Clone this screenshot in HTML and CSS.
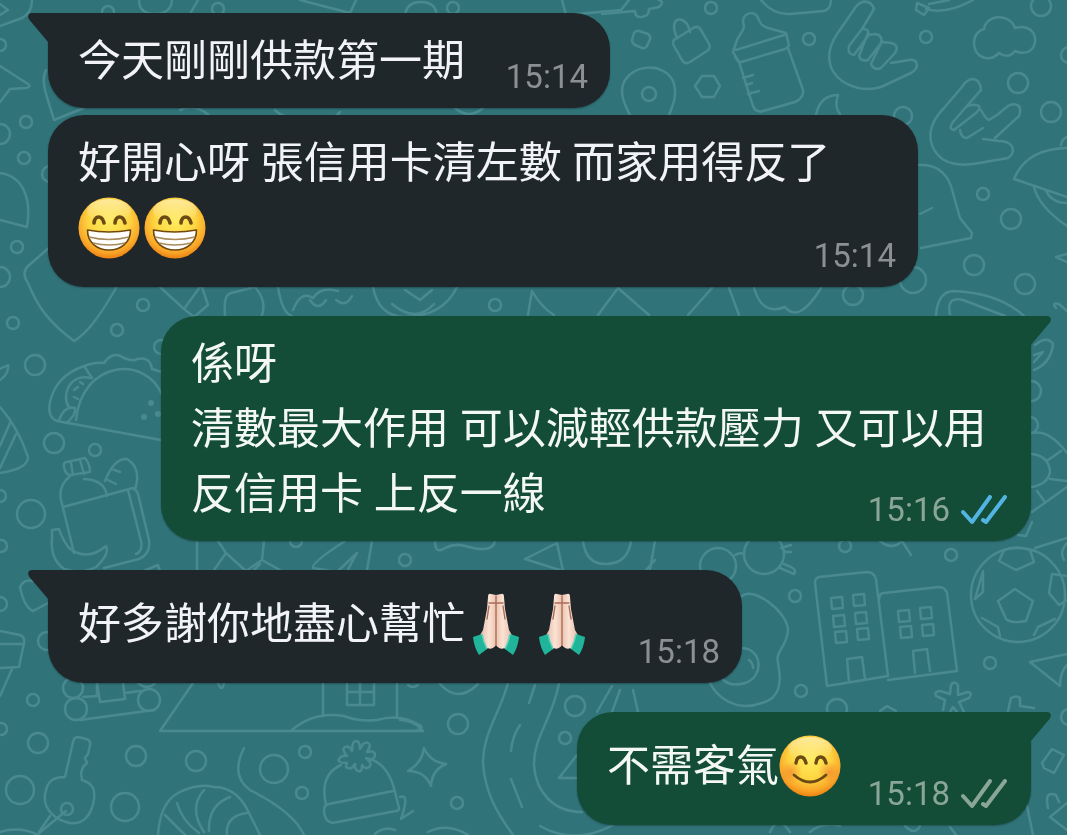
FILE: index.html
```html
<!DOCTYPE html>
<html lang="zh-Hant">
<head>
<meta charset="UTF-8">
<meta name="viewport" content="width=device-width, initial-scale=1.0">
<title>Chat</title>
<link rel="stylesheet" href="styles.css">
</head>
<body>

<!-- shared icons -->
<svg class="defs" width="0" height="0" aria-hidden="true">
  <defs>
    <radialGradient id="face" cx="50%" cy="38%" r="62%">
      <stop offset="0" stop-color="#ffec60"/>
      <stop offset="0.55" stop-color="#fdd540"/>
      <stop offset="0.85" stop-color="#f9a528"/>
      <stop offset="1" stop-color="#ec8212"/>
    </radialGradient>
    <linearGradient id="shine" x1="0" y1="0" x2="0" y2="1">
      <stop offset="0" stop-color="#fff8d8" stop-opacity="0.6"/>
      <stop offset="1" stop-color="#fff8d8" stop-opacity="0"/>
    </linearGradient>
    <radialGradient id="blush">
      <stop offset="0" stop-color="#f0722a" stop-opacity="0.55"/>
      <stop offset="1" stop-color="#f0722a" stop-opacity="0"/>
    </radialGradient>
    <linearGradient id="skin" x1="0" y1="0" x2="1" y2="0">
      <stop offset="0" stop-color="#e3b7a2"/>
      <stop offset="0.3" stop-color="#fae3d6"/>
      <stop offset="0.46" stop-color="#efc9b6"/>
      <stop offset="0.54" stop-color="#efc9b6"/>
      <stop offset="0.7" stop-color="#fae3d6"/>
      <stop offset="1" stop-color="#e3b7a2"/>
    </linearGradient>
  </defs>
  <symbol id="grin" viewBox="0 0 62 62">
    <circle cx="31" cy="31" r="30.5" fill="url(#face)"/>
    <ellipse cx="31" cy="14" rx="22" ry="12" fill="url(#shine)"/>
    <path d="M16 26c1-8 8-8 10 0M37 26c1-8 8-8 10 0" fill="none" stroke="#6b4a14" stroke-width="3.6" stroke-linecap="round"/>
    <path d="M9.500 33q21 4 43 0c0 13-10 20-21.500 20S9.500 46 9.500 33z" fill="#fff" stroke="#70480c" stroke-width="1.600" stroke-linejoin="round"/>
    <path d="M11 40q20 5 40 0M15 46q16 4 32 0" fill="none" stroke="#a98a5c" stroke-width="1.500"/>
  </symbol>
  <symbol id="smile" viewBox="0 0 62 62">
    <circle cx="31" cy="31" r="30.5" fill="url(#face)"/>
    <ellipse cx="31" cy="14" rx="22" ry="12" fill="url(#shine)"/>
    <circle cx="12" cy="37" r="11" fill="url(#blush)"/>
    <circle cx="50" cy="37" r="11" fill="url(#blush)"/>
    <path d="M17 28c1-8 8-8 10 0M37 28c1-8 8-8 10 0" fill="none" stroke="#6b4a14" stroke-width="3.400" stroke-linecap="round"/>
    <path d="M15 40q16 14 32 0" fill="none" stroke="#6b4a14" stroke-width="2.800" stroke-linecap="round"/>
  </symbol>
  <symbol id="pray" viewBox="0 0 62 62">
    <path d="M26 1q-3-1-3 3l-1 12-4 21-4 7 5 9q7 6 12-1 5 7 12 1l5-9-4-7-4-21-1-12q0-4-3-3l-5 1z" fill="url(#skin)"/>
    <path d="M31 3v49M24 10h6M32 10h6M24 13l-2 13M38 13l2 13" fill="none" stroke="#a96e58" stroke-width="1.400" stroke-linecap="round"/>
    <path d="M8 44l9-3q1 7 5 15l-8 6q-5-8-6-18z" fill="#20b59a"/>
    <path d="M54 44l-9-3q-1 7-5 15l8 6q5-8 6-18z" fill="#20b59a"/>
    <path d="M17 41q1 7 5 15M45 41q-1 7-5 15" fill="none" stroke="#5ad3bb" stroke-width="1.500"/>
  </symbol>
  <symbol id="ticks" viewBox="0 0 46 30">
    <path d="M2 17l9 10L29 2M22 25l3 2L44 2" fill="none" stroke="currentColor" stroke-width="4" stroke-linecap="round" stroke-linejoin="round"/>
  </symbol>
  <symbol id="tail" viewBox="0 0 20 29">
    <path d="M20 0H4C0 0-1 4 1.500 7L20 29z" fill="currentColor"/>
  </symbol>
</svg>

<!-- wallpaper doodles -->
<svg class="wallpaper" viewBox="0 0 1067 835" preserveAspectRatio="xMidYMid slice" aria-hidden="true">
  <!-- bubbles -->
  <g>
    <circle cx="0" cy="45" r="6"/><circle cx="26" cy="122" r="6"/><circle cx="0" cy="134" r="10"/><circle cx="24" cy="158" r="6"/>
    <circle cx="17" cy="247" r="6"/><circle cx="0" cy="277" r="10"/><circle cx="13" cy="323" r="6"/><circle cx="50" cy="174" r="8"/>
    <circle cx="143" cy="305" r="6"/><circle cx="117" cy="330" r="6"/><circle cx="35" cy="365" r="10"/><circle cx="161" cy="347" r="7"/>
    <circle cx="54" cy="443" r="10"/><circle cx="95" cy="450" r="6"/><circle cx="0" cy="496" r="6"/><circle cx="31" cy="514" r="14"/>
    <circle cx="1" cy="546" r="6"/><circle cx="0" cy="604" r="7"/><circle cx="47" cy="641" r="9"/><circle cx="33" cy="700" r="6"/>
    <circle cx="1" cy="729" r="6"/><circle cx="38" cy="743" r="10"/><circle cx="20" cy="790" r="14"/><circle cx="125" cy="807" r="14"/>
    <circle cx="136" cy="756" r="10"/><circle cx="196" cy="761" r="10"/><circle cx="274" cy="769" r="14"/><circle cx="305" cy="752" r="6"/>
    <circle cx="302" cy="793" r="6"/><circle cx="458" cy="724" r="10"/><circle cx="457" cy="803" r="6"/><circle cx="575" cy="706" r="10"/>
    <circle cx="565" cy="738" r="6"/><circle cx="405" cy="560" r="6"/><circle cx="296" cy="541" r="6"/><circle cx="495" cy="305" r="6"/>
    <circle cx="218" cy="9" r="6"/><circle cx="108" cy="12" r="6"/><circle cx="453" cy="8" r="6"/>
    <circle cx="641" cy="8" r="0"/><circle cx="711" cy="8" r="6"/><circle cx="809" cy="39" r="6"/><circle cx="926" cy="37" r="6"/><circle cx="1041" cy="6" r="10"/>
    <circle cx="1018" cy="83" r="10"/><circle cx="1051" cy="112" r="10"/><circle cx="903" cy="116" r="9"/><circle cx="983" cy="194" r="6"/>
    <circle cx="1011" cy="219" r="10"/><circle cx="974" cy="265" r="10"/><circle cx="1025" cy="284" r="10"/><circle cx="913" cy="280" r="13"/>
    <circle cx="853" cy="295" r="10"/><circle cx="1031" cy="391" r="10"/><circle cx="1030" cy="425" r="8"/><circle cx="845" cy="546" r="6"/>
    <circle cx="951" cy="555" r="6"/><circle cx="795" cy="596" r="6"/><circle cx="990" cy="663" r="6"/><circle cx="801" cy="691" r="6"/>
    <circle cx="837" cy="709" r="10"/><circle cx="1069" cy="55" r="8"/><circle cx="1069" cy="717" r="8"/>
  </g>
  <!-- top left corner -->
  <path d="M0 26l22-8q10-5 10-18M0 4l8 6-8 5M0 66l28 18q4 3-2 4l-16 1-10 13M0 173c22 3 32 24 27 54L0 220"/>
  <path d="M46 70c-6 12 1 26 8 50l30-12M58 240l-30 26q-7 7 0 17c10 25 22 40 46 58 14-8 28-28 46-60"/>
  <path d="M139 0q0 14 16 14T172 0M190 14l8-14M300 0l50 13 6-13M405 18q0-16 16-16t16 16M562 0l4 15 55-5 8-10"/>
  <!-- row between bubbles 1 and 2 -->
  <path d="M180 110q15-7 30 6M275 110q5 5 10 6M340 112l-5 5M455 108q14 12 28 0"/>
  <!-- puzzle, lock, pin -->
  <path d="M602 14l33-3q0 7 7 6t7-8l10-2q6-5 0-7"/>
  <path d="M634 33q2-3 5-2l9 3q3 2 2 5l-3 7q-2 3-5 2l-7-3q-3-2-3-5z"/>
  <path d="M674 40l19-12q5-3 8 2l8 14q2 4-2 7l-17 11q-5 3-8-2l-8-14q-2-4 0-6zM677 38c-6-14-2-20 5-18 6 2 7 8 8 12"/>
  <path d="M630 115c-8-15-10-24-6-33 10-19 40-19 49-1 5 13 0 24-4 34"/><circle cx="649" cy="94" r="7"/>
  <path d="M702 76h12l6 10-6 11h-12l-7-11z"/>
  <!-- baby bottle -->
  <path d="M739 62l-6-10 4-12c4-8 7-10 7-14-4-12 8-16 13-10 3 5 2 9 11 12l18 5 3 12q-1 3-4 4l-44 13q-4 0-6-6M736 50l48-15M739 62l14 44q3 7 10 5l32-9q9-4 8-12l-15-42M743 78l10-3M746 85l6-2M748 94l11-3"/>
  <path d="M761 0q12 15 29 14l34-3q7-2 7-11"/>
  <!-- call me hand -->
  <path d="M874 9q-3-9-12-7-5 2-9 9l-16 23c-12 18-10 36 5 47 14 9 26 10 39 6l30-14q8-5 5-11-2-3-7-2l-18 3"/>
  <path d="M874 9l-12 20M862 29l-13 17q-2 8 5 9l14-19q2-8-6-7M868 33l-9 23q2 6 9 4l13-17q2-8-6-9l-7 1M882 41l-11 23q3 7 10 4l14-15q5-8-4-10l-9-1"/>
  <path d="M816 115q4-20 22-20-4 12 2 19"/>
  <!-- rock hand -->
  <path d="M981 90q-1-11-9-11-6 1-10 8l-18 21c-15 15-18 32-7 46 10 12 27 12 42 9l29-5q8-6 3-13-4-4-12-4l-16-2M995 138l24-22q3-9-2-11-4-2-9 1l-11 9-8 5q-4-2-8-10M981 90l-15 17-13 15q-5 7 1 8l22-17q7-7 0-8-5-1-10 2M960 130q1 8 7 8l16-10M967 138l16-10"/>
  <!-- cloud -->
  <path d="M984 29c2-15 26-16 31-1 13-4 21 4 20 14-2 12-13 12-20 9-5 7-12 5-16 2-11 11-25 3-25-10 0-8 5-13 10-14z"/>
  <path d="M917 3l12 5-5 7-8-5zM926 9q20 6 47-9M929 4l20-4"/>
  <!-- hat and ufo -->
  <path d="M919 165q24-1 32 21l9 32 12 15-1 5-50 10M920 214l12-6"/>
  <path d="M1014 179q12-30 53-31M1014 179l53 18M1034 187q5 20 33 39M1046 191q6 12 21 12M1061 145q1-6 6-8M1056 257l11-3M1056 257l11 5"/>
  <path d="M936 315q2-24 18-24 45 2 70 25M950 314q-4-18 13-14l42 16M1056 308q-5-6 3-4l8 7M1035 345q12-10 18-1-2 19-19 26M1034 355l9-3-9 10"/>
  <!-- strip between bubble 2 and outgoing -->
  <path d="M160 287l24 22 16-22M184 309l10 8 14-12-6-18M225 315q-2-20 6-22l24-6q12 14 7 28M278 287q4 26 14 29M293 310q8-20 20-12 8-12 25-7M310 300q8 12 16 0M336 300q10 8 16-4M373 287q5 28 30 30 40 0 54-30M392 304q24 20 42 0M405 290l15 10 12-10M528 315l4-24q9 16 22 24M598 315l20-27 31 27M712 288l-24 27M729 288l10 27M754 288q8 28 31 19 14 17 36-19"/>
  <!-- taco -->
  <path d="M161 440L57 421q-10-4-7-19c4-18 17-30 34-36q12-4 20-3 9-13 20-5 10 4 13 1 13-3 15 10l10 3M76 420c6-60 70-65 86-25M84 366l8 12M91 378c-22-5-30 18-22 29M59 420q6-15 16-12 1 8-9 15M74 390l4-3M80 382l3 2M74 397l4 2"/>
  <circle cx="151" cy="403" r="3" class="dot"/><circle cx="144" cy="417" r="3" class="dot"/><circle cx="158" cy="414" r="3" class="dot"/>
  <!-- pizza -->
  <path d="M0 407q18 20 28 50 0 12-28 16M10 423L0 446M16 434L0 468M0 369l8-4q1 9-8 15"/>
  <!-- backpack and banana -->
  <path d="M70 475q-5-1-6-8-1-5 3-5l18-4q5 6 5 14zM71 463l2 12M80 460l4 14M70 476q-12 10-9 24l13 53M63 507l70-19q4 2 5 6l11 46q2 14-10 19l-35 9M128 490l13 51q2 10-5 13M84 479q21 1 23 17M105 481q9-23 22-22 15 9 8 31M112 469l8 3M108 480l8 4"/>
  <path d="M52 530l7-1q3 10 10 19 18 14 37-2 4 8-10 21-16 8-32 2-14-10-12-31z"/>
  <!-- right edge flower -->
  <path d="M1032 433q17-4 35 20M1032 454q17 2 18 18-2 12-18 15M1048 460l13-9M1050 479l17 2M1037 491l8 11M1032 512l35-25M1032 522l-6 14-8-1"/>
  <!-- strip above bubble 4 -->
  <path d="M197 541v29M214 570l12-17-8-12M226 553l20 18 16-11 2-19M262 560l27 15M254 570l6-6M345 541q-34 22-32 27l24 4 20-19-12 22M372 541l-6 35M435 541q0 14 10 7 10-5 20-2 28 8 30-5M525 559l32-16 6 28zM583 541q3 24 24 23 21-1 24-23M655 541l-6 34M646 570l9-10"/>
  <path d="M20 587q4-8 12-6l16-4M20 587q4 20 13 24l15-8M0 631l20 4q5 2 4 8l-5 24-19 1M0 644l23 0M12 669L0 696M134 575l24-10 3 9"/>
  <!-- glasses -->
  <circle cx="718" cy="566" r="18"/><circle cx="764" cy="554" r="20"/>
  <path d="M735 555q5-3 9-1M781 548l10-3M784 552h7M780 568l14 6q3-4-3-7l-7-3M880 541q12 10 22 0l9 14"/>
  <!-- egg -->
  <path d="M742 596c10-10 44 14 46 33 0 17-13 21-10 34 4 20 2 35-16 40-28 10-46-8-52-20M720 676q8 12 25 7c19-6 18-34-3-35M749 660q4 3 4 8"/>
  <!-- towers -->
  <path d="M827 686l-12-103q0-5 4-6l48-5q7 0 9 7l12 97zM879 600q0-7 5-7l55-6q6 0 8 6l10 78-69 9M831 598l11-1 1 11-11 1zM853 595l11-1 1 11-11 1zM833 616l11-1 1 11-11 1zM855 613l11-1 1 11-11 1zM835 632l11-1 1 11-11 1zM857 629l11-1 1 11-11 1zM898 611l11-1 1 11-11 1zM920 608l11-1 1 11-11 1zM900 627l11-1 1 11-11 1zM922 625l11-1 1 11-11 1zM849 682l-2-23 15-2 3 22M915 673l-2-22 14-2 3 22"/>
  <!-- football -->
  <circle cx="1018" cy="595" r="47"/>
  <path d="M1015 589l18 12-7 20q-14 3-20-2l-8-18zM999 561l5-11q12-5 26 0l4 12-18 8zM983 571l-8 28 8-7zM1067 576l-15-2-3 19 10 12 8-5M982 618l16 9 2 9M1034 635l4-8 17-8M1035 548l32-10M1067 543q-8 9-3 17"/>
  <path d="M1067 654l-37 8 30 24q0-14 7-21"/>
  <!-- star flower -->
  <path d="M943 710l2-10-9-4q-2-5 4-5l10 3 1-9q3-5 7 0v10l10-3q5 1 1 6l-10 4 5 10M950 712l3-5 4 5M1008 711l3-13q6-3 9 0v8l14 2M880 711l7-5 9 5"/>
  <!-- tram and house -->
  <circle cx="73" cy="688" r="10"/><circle cx="76" cy="709" r="11"/><circle cx="149" cy="700" r="11"/>
  <path d="M80 720l74-10M83 697l14-1v-13M97 683l3 19 25-3-2-16M125 693l15-2M138 683q10 8 17 0"/>
  <path d="M193 683l-33 48h255q8-2 6-5-20-13-44-6-18 2-33-4-30-5-52 14M323 683v33M397 683v34M347 683v22h27v-22M347 692h27M360 683v22M218 683q4 10 6 0M408 685q5 4 10 0M440 684q18 20 38 0"/>
  <!-- key -->
  <path d="M65 777l8-35q1-5 5-5l8 2q5 1 4 6l-2 9-3 4 2 5-4 4-2 6 1 7c12 4 13 10 12 19-2 16-11 26-24 24-16-3-27-15-25-28 2-15 9-18 20-18M50 816l-11 16M66 811l-28 23M0 832q20-6 38 3"/><circle cx="67" cy="809" r="6"/>
  <!-- croissant, scarf -->
  <path d="M158 835q2-32 20-42 20-10 36-6 20 0 32 20l14 28M165 815l20 20M177 803q5 18 22 30M204 790q-16 18 0 42M230 797q-22 8-21 34M247 813q-22 3-20 22M244 748q-14 28 6 42 44 22 54 45"/>
  <!-- beanie -->
  <path d="M326 805q-7-30 15-40M366 758q22 4 29 34l4 16q0 3-3 3l-64 12q-8-2-8-13 0-5 5-6l64-13M350 768q-6 1-3-5-10 0-8-4t8-3q-6-7-2-9t7 4q0-10 4-10t4 8q4-8 8-6t-1 9q8-2 8 3t-8 4q6 5 2 8t-7-2q0 8-4 6t-3-7q-4 6-5 4zM375 834q8-8 20-4"/>
  <!-- sparkle, road, hill -->
  <path d="M424 748q6 14 22 16-14 6-15 22-6-15-23-15 14-8 16-23zM400 720q14 0 23 11h-23M508 683c-8 30-25 50-25 80 2 30 14 50 30 72M559 683c-6 35-26 55-25 82 2 28 20 47 48 47M535 685l-6 18M520 725q-8 12-9 26M511 779l11 28M540 826q35 20 75-2M400 797q10-4 1 22l12-8M428 832q20-10 40 3M577 755l-18 23h20M612 686l-15 26M620 690l-8 22M633 690l5 22"/>
  <path d="M1042 763l10-14 12 6-10 18-10-5zM1050 817l17-14M1050 817l17 13M1048 808q-4-18 8-13l3 7M1027 806l6 29M770 832q8-18 20 0M810 832q12-10 30-6M905 826q10 10 15 0M950 827l6 8"/>
</svg>

<main class="chat">
  <div class="msg in first">
    <svg class="tail"><use href="#tail"/></svg>
    <p class="text">今天剛剛供款第一期<span class="space"></span></p>
    <div class="meta"><time>15:14</time></div>
  </div>

  <div class="msg in follow">
    <p class="text ends-emoji">好開心呀 張信用卡清左數 而家用得反了<svg class="emoji" role="img" aria-label="😁"><use href="#grin"/></svg><svg class="emoji" role="img" aria-label="😁"><use href="#grin"/></svg><span class="space"></span></p>
    <div class="meta"><time>15:14</time></div>
  </div>

  <div class="msg out">
    <svg class="tail"><use href="#tail"/></svg>
    <p class="text">係呀<br>清數最大作用 可以減輕供款壓力 又可以用<wbr>反信用卡 上反一線<span class="space"></span></p>
    <div class="meta"><time>15:16</time><svg class="ticks read"><use href="#ticks"/></svg></div>
  </div>

  <div class="msg in">
    <svg class="tail"><use href="#tail"/></svg>
    <p class="text tall">好多謝你地盡心幫忙<svg class="emoji" role="img" aria-label="🙏🏻"><use href="#pray"/></svg><svg class="emoji" role="img" aria-label="🙏🏻"><use href="#pray"/></svg><span class="space"></span></p>
    <div class="meta"><time>15:18</time></div>
  </div>

  <div class="msg out">
    <svg class="tail"><use href="#tail"/></svg>
    <p class="text tall">不需客氣<svg class="emoji" role="img" aria-label="😊"><use href="#smile"/></svg><span class="space"></span></p>
    <div class="meta"><time>15:18</time><svg class="ticks"><use href="#ticks"/></svg></div>
  </div>
</main>

</body>
</html>
```
FILE: styles.css
```css
body {
  margin: 0;
  background-color: #30747a;
  font-family: Roboto, "Noto Sans CJK TC", sans-serif;
}

.defs {
  position: absolute;
}

/* doodles sit behind the messages */
.wallpaper {
  position: fixed;
  top: 0;
  left: 0;
  width: 100%;
  height: 100%;
  fill: none;
  stroke: #4a8990;
  stroke-width: 2.5;
  stroke-linecap: round;
  stroke-linejoin: round;
}

.wallpaper .dot {
  fill: #4a8990;
  stroke: none;
}

.chat {
  position: relative;
  display: flex;
  flex-direction: column;
  padding: 13px 36px 10px 48px;
}

.msg {
  position: relative;
  display: grid;
  box-sizing: border-box;
  max-width: 88.5%;
  margin-top: 29px;
  border-radius: 36px;
  box-shadow: 0 1px 2px rgba(0, 0, 0, 0.3);
}

.msg.first {
  margin-top: 0;
}

.msg.follow {
  margin-top: 7px;
}

.in {
  align-self: flex-start;
  padding: 16px 22px 14px 30px;
  background-color: #20272b;
  color: #f1f3f6;
}

.out {
  align-self: flex-end;
  padding: 16px 24px 14px 30px;
  background-color: #144d37;
  color: #f3f8f5;
}

.in:not(.follow) {
  border-top-left-radius: 0;
}

.out {
  border-top-right-radius: 0;
}

.tail {
  position: absolute;
  top: 0;
  width: 20px;
  height: 29px;
}

.in .tail {
  right: 100%;
  color: #20272b;
}

.out .tail {
  left: 100%;
  color: #144d37;
  transform: scaleX(-1);
}

/* text and time share one cell, the time in its bottom corner */
.text,
.meta {
  grid-area: 1 / 1;
}

.text {
  margin: 0;
  padding-right: 8px;
  font-size: 43px;
  line-height: 65px;
}

.text.ends-emoji {
  padding-bottom: 12px;
}

.text.tall {
  padding-bottom: 6px;
  line-height: 77px;
}

/* keeps the last line clear of the time */
.space {
  display: inline-block;
  width: 115px;
}

.out .space {
  width: 154px;
}

.emoji {
  width: 62px;
  height: 62px;
  margin-right: 4px;
  vertical-align: -16px;
}

.meta {
  display: flex;
  align-items: center;
  align-self: end;
  justify-self: end;
  gap: 11px;
  font-size: 33px;
  line-height: 34px;
  color: #8b9093;
}

.out .meta {
  color: #8aa698;
}

.ticks {
  width: 46px;
  height: 30px;
}

.ticks.read {
  color: #53b4e4;
}
```
